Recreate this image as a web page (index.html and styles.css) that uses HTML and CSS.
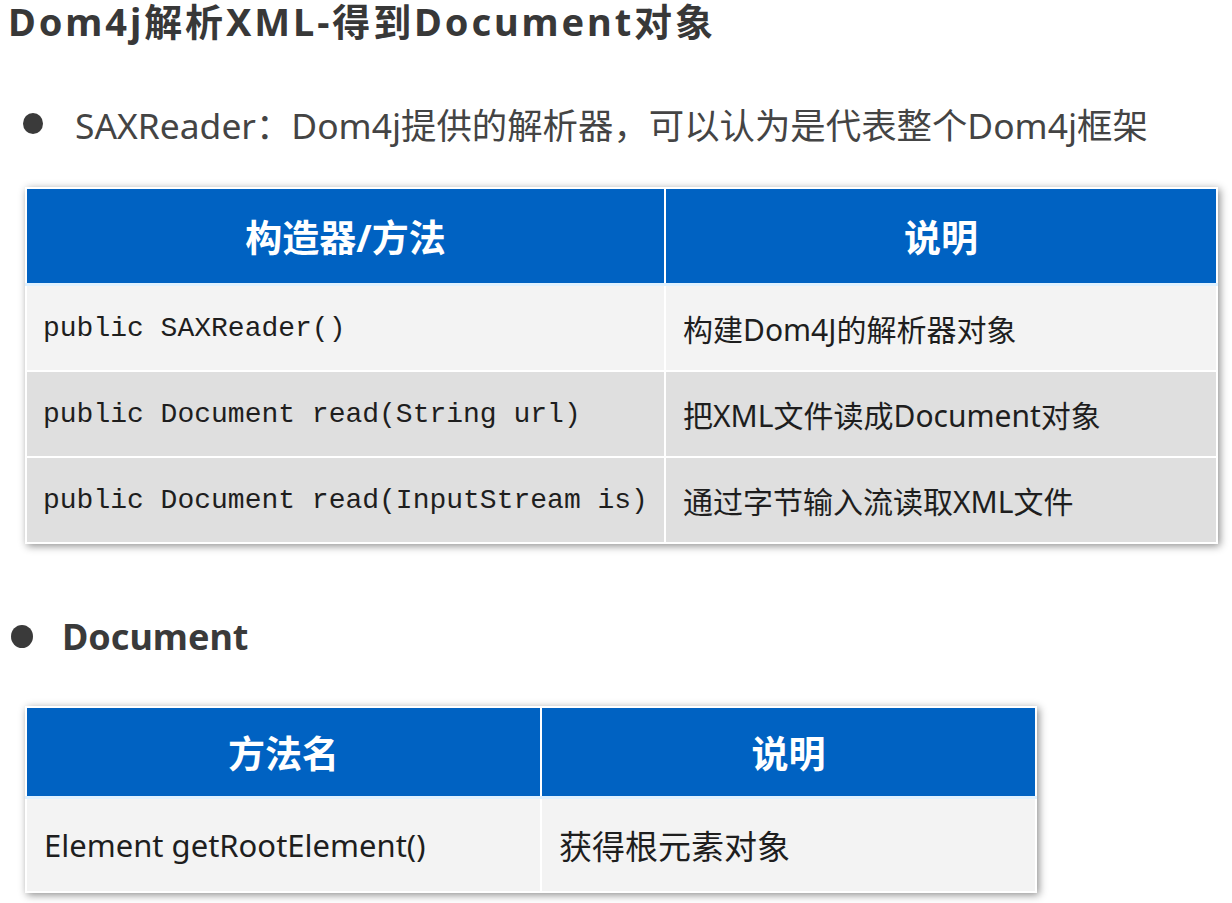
FILE: index.html
```html
<!DOCTYPE html>
<html lang="zh-CN">
<head>
    <meta charset="UTF-8">
    <meta name="viewport" content="width=device-width, initial-scale=1.0">
    <title>Dom4j解析XML-得到Document对象</title>
    <link rel="stylesheet" href="styles.css">
</head>
<body>
    <div class="slide">
        <h1 class="title">Dom4j解析XML-得到Document对象</h1>

        <div class="point point-first">
            <span class="dot"></span>
            <span class="point-text">SAXReader：Dom4j提供的解析器，可以认为是代表整个Dom4j框架</span>
        </div>

        <table class="api-table table-reader">
            <thead>
                <tr>
                    <th class="col-a">构造器/方法</th>
                    <th>说明</th>
                </tr>
            </thead>
            <tbody>
                <tr class="row-light">
                    <td class="code">public SAXReader()</td>
                    <td class="desc">构建Dom4J的解析器对象</td>
                </tr>
                <tr class="row-dark">
                    <td class="code">public Document read(String url)</td>
                    <td class="desc">把XML文件读成Document对象</td>
                </tr>
                <tr class="row-dark">
                    <td class="code">public Document read(InputStream is)</td>
                    <td class="desc">通过字节输入流读取XML文件</td>
                </tr>
            </tbody>
        </table>

        <div class="point point-second">
            <span class="dot"></span>
            <span class="point-text strong">Document</span>
        </div>

        <table class="api-table table-document">
            <thead>
                <tr>
                    <th class="col-a">方法名</th>
                    <th>说明</th>
                </tr>
            </thead>
            <tbody>
                <tr class="row-light">
                    <td>Element getRootElement()</td>
                    <td class="desc">获得根元素对象</td>
                </tr>
            </tbody>
        </table>
    </div>
</body>
</html>
```

FILE: styles.css
```css
body {
    margin: 0;
    padding: 0;
    background-color: #fff;
    font-family: "Noto Sans", "Noto Sans CJK SC", sans-serif;
    color: #3c3c3c;
}

.slide {
    width: 1232px;
    height: 903px;
    overflow: hidden;
}

.title {
    margin: 0;
    padding: 2px 0 0 8px;
    font-size: 38px;
    line-height: 38px;
    letter-spacing: 2.9px;
    font-weight: bold;
    color: #383838;
}

.point {
    display: flex;
    align-items: center;
}

.point .dot {
    width: 20px;
    height: 21px;
    border-radius: 50%;
    background-color: #3a3a3a;
    flex-shrink: 0;
}

.point-first {
    margin-top: 61px;
    padding-left: 23px;
    height: 44px;
}

.point-first .dot {
    margin-right: 32px;
}

.point-first .point-text {
    font-size: 35.4px;
    color: #444;
}

.point-second {
    margin-top: 70px;
    padding-left: 11px;
    height: 44px;
}

.point-second .dot {
    width: 22px;
    height: 23px;
    margin-right: 29px;
}

.point-text.strong {
    font-size: 36px;
    font-weight: bold;
    color: #3a3a3a;
}

/* tables */

.api-table {
    border-collapse: collapse;
    table-layout: fixed;
    margin-left: 25px;
    box-shadow: 2px 2px 8px rgba(0, 0, 0, 0.45);
}

.api-table th,
.api-table td {
    border: 2px solid #fff;
    padding: 0 17px;
    text-align: left;
    color: #1e1e1e;
    white-space: nowrap;
}

.api-table th {
    background-color: #0062c2;
    color: #fff;
    font-size: 37px;
    font-weight: bold;
    text-align: center;
}

.api-table thead tr {
    border-bottom: 3px solid #dff1ff;
}

.row-light td {
    background-color: #f3f3f3;
}

.row-dark td {
    background-color: #dfdfdf;
}

.table-reader {
    width: 1193px;
    margin-top: 42px;
}

.table-reader .col-a {
    width: 603px;
}

.table-reader th {
    height: 94px;
}

.table-reader td {
    height: 84px;
    font-size: 30px;
}

.table-reader td.code {
    font-family: "Liberation Mono", "DejaVu Sans Mono", monospace;
    font-size: 28px;
    padding-left: 16px;
    padding-right: 0;
}

.table-document {
    width: 1012px;
    margin-top: 48px;
}

.table-document .col-a {
    width: 479px;
}

.table-document th {
    height: 88px;
}

.table-document td {
    height: 92px;
    font-size: 31px;
}

.table-document td.desc {
    font-size: 33px;
}
```
